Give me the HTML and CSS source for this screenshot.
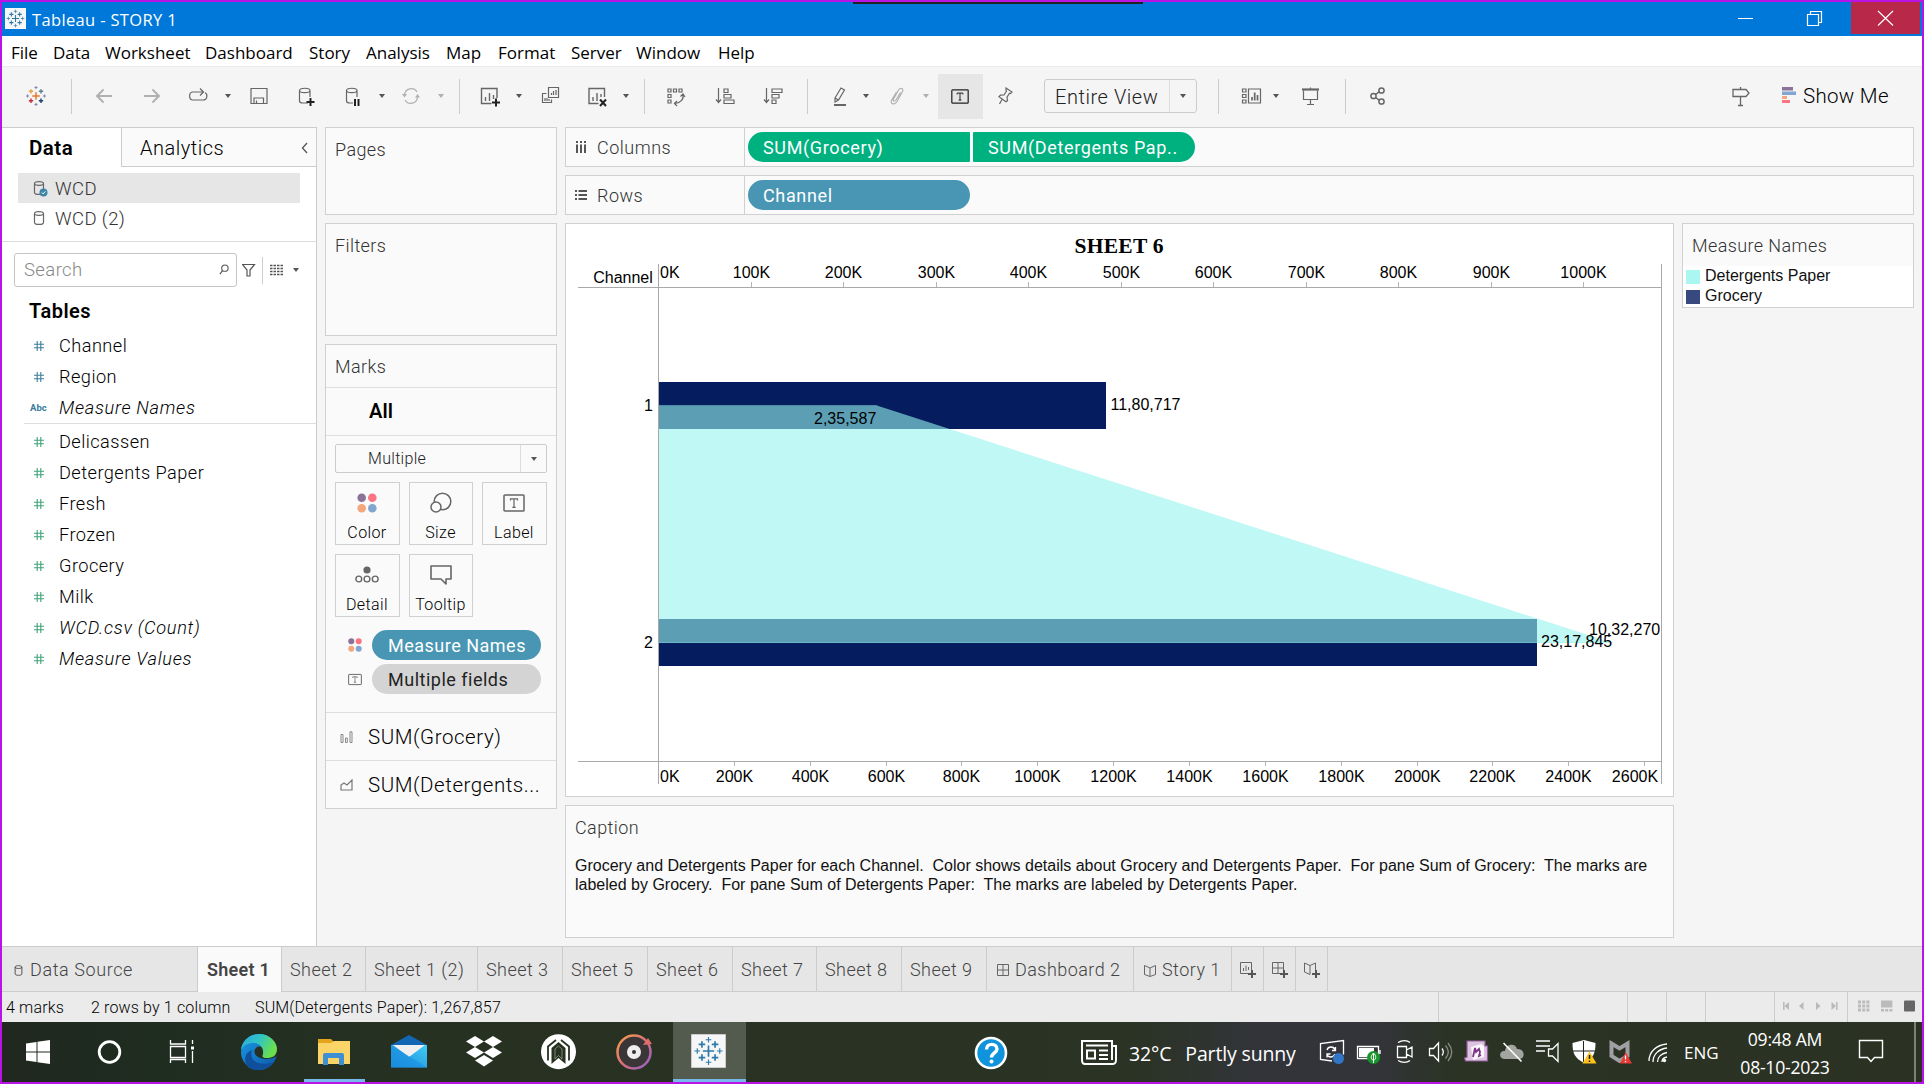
FILE: index.html
```html
<!DOCTYPE html>
<html lang="en">
<head>
<meta charset="utf-8">
<title>Tableau - STORY 1</title>
<link rel="stylesheet" href="styles.css">
</head>
<body>
<svg class="defs" aria-hidden="true">
  <defs>
    <symbol id="caret" viewBox="0 0 8 8"><path d="M1 2h6L4 6z" fill="currentColor"/></symbol>
    <symbol id="logo" viewBox="0 0 32 32"><path d="M16 10v12M10 16h12M9 5.500v7M5.500 9h7M23 5.500v7M19.500 9h7M9 19.500v7M5.500 23h7M23 19.500v7M19.500 23h7" fill="none" stroke="currentColor" stroke-width="1.800"/><path d="M16 1v6M13 4h6M16 25v6M13 28h6M4 13v6M1 16h6M28 13v6M25 16h6" fill="none" stroke="currentColor" stroke-width="1.200"/></symbol>
    <symbol id="db" viewBox="0 0 12 16"><path d="M1.500 3.500v9c0 2.600 9 2.600 9 0v-9c0-2.600-9-2.600-9 0c0 2.400 9 2.400 9 0" fill="none" stroke="currentColor" stroke-width="1.200"/></symbol>
    <symbol id="hash" viewBox="0 0 12 12"><path d="M4.200 1v10M7.800 1v10M1 4.200h10M1 7.800h10" fill="none" stroke="currentColor" stroke-width="1.100"/></symbol>
    <symbol id="dots" viewBox="0 0 20 20"><circle cx="4.700" cy="4.700" r="4.300" fill="#8a7299"/><circle cx="15.300" cy="4.700" r="4.300" fill="#fa7482"/><circle cx="4.700" cy="15.300" r="4.300" fill="#f2a77e"/><circle cx="15.300" cy="15.300" r="4.300" fill="#82a6cf"/></symbol>
    <symbol id="tbox" viewBox="0 0 22 18"><rect x="1" y="1" width="20" height="16" rx=".8" fill="none" stroke="currentColor" stroke-width="1.500"/><path d="M7.500 6.500v-1.700h7v1.700M11 4.800v8.600M9.300 13.400h3.400" fill="none" stroke="currentColor" stroke-width="1.200"/></symbol>
  </defs>
</svg>
<div class="screen">
  <header class="titlebar">
    <svg class="app-icon"><rect width="21" height="21" fill="#f7f7f7"/><use href="#logo" x="1" y="1" width="19" height="19"/></svg>
    <span class="app-name">Tableau - STORY 1</span>
    <svg class="win-btn" viewBox="0 0 69 32"><path d="M25 16.500h15" stroke="#fff"/></svg>
    <svg class="win-btn" viewBox="0 0 69 32"><path d="M25.500 12.500h11v11h-11zM28.500 12v-2.500h11v11h-3" fill="none" stroke="#fff" stroke-width="1.200"/></svg>
    <svg class="win-btn close" viewBox="0 0 69 32"><path d="M27 9l15 14.500M42 9l-15 14.500" stroke="#fff" stroke-width="1.200"/></svg>
    <div class="notch"></div>
  </header>
  <nav class="menubar"><span>File</span><span>Data</span><span>Worksheet</span><span>Dashboard</span><span>Story</span><span>Analysis</span><span>Map</span><span>Format</span><span>Server</span><span>Window</span><span>Help</span></nav>
  <div class="toolbar">
    <svg class="ic" viewBox="0 0 32 32"><g fill="none" stroke-width="2.300"><path d="M16 10v12M10 16h12" stroke="#e8762d"/><path d="M8 5v7M4.500 8.500h7" stroke="#e8a14a"/><path d="M24 5v7M20.500 8.500h7" stroke="#5c7f91"/><path d="M8 20v7M4.500 23.500h7" stroke="#c4303f"/><path d="M24 20v7M20.500 23.500h7" stroke="#1f4473"/><path d="M16 0v5M13.500 2.500h5M16 27v5M13.500 29.500h5M2.500 13.500v5M0 16h5M29.500 13.500v5M27 16h5" stroke="#8088b0" stroke-width="1.600"/></g></svg>
    <i class="sep"></i>
    <svg class="ic off thick" viewBox="0 0 24 24"><path d="M20 12H5M11.500 5.500L5 12l6.500 6.500"/></svg>
    <svg class="ic off thick" viewBox="0 0 24 24"><path d="M4 12h15M12.500 5.500L19 12l-6.500 6.500"/></svg>
    <svg class="ic" viewBox="0 0 24 24"><path d="M17 8H7c-4.500 0-4.500 8 0 8h10c4.500 0 5-6 2-7.300M14 4.500L17.500 8 14 11.500"/></svg>
    <svg class="car"><use href="#caret"/></svg>
    <svg class="ic" viewBox="0 0 24 24"><path d="M4 4.500h16v15H4zM7 19v-5h9.500v5M9.500 19v-2.500"/></svg>
    <svg class="ic" viewBox="0 0 24 24"><path d="M13 19H8c-3 0-3.500-1-3.500-2V6.500c0-3 10.500-3 10.500 0V13M4.500 6.500c0 2.800 10.500 2.800 10.500 0"/><path d="M15.500 14v8M11.500 18h8" stroke="#222" stroke-width="2"/></svg>
    <svg class="ic" viewBox="0 0 24 24"><path d="M12 19H9c-3 0-3.500-1-3.500-2V6.500c0-3 10.500-3 10.500 0V13M5.500 6.500c0 2.800 10.500 2.800 10.500 0"/><path d="M14 15v7M17.500 15v7" stroke="#222" stroke-width="2"/></svg>
    <svg class="car"><use href="#caret"/></svg>
    <svg class="ic off" viewBox="0 0 24 24"><path d="M5.500 11C6 4 15 2.500 18 8M18.500 13C18 20 9 21.500 6 16"/><path d="M3 10h5l-2.500 3.500zM16 13.500h5L18.500 10z" fill="currentColor" stroke="none"/></svg>
    <svg class="car off"><use href="#caret"/></svg>
    <i class="sep"></i>
    <svg class="ic" viewBox="0 0 24 24"><path d="M12.500 19.500h-10v-15h15.500V14M6.500 17v-4M10.500 17V9M14.500 15v-4" stroke-width="1.400"/><path d="M17 14.500v8M13 18.500h8" stroke="#222" stroke-width="2"/></svg>
    <svg class="car"><use href="#caret"/></svg>
    <svg class="ic" viewBox="0 0 24 24"><path d="M9.500 3.500h10v10h-10zM7.500 9.500h-4v9h9v-3M12.500 11V9M14.500 11V7M17 11V6M6 17v-3M8 17v-3M10 17v-2"/></svg>
    <svg class="ic" viewBox="0 0 24 24"><path d="M12.500 19.500H3v-15h15.500V13M7 17v-4M11 17V9M15 13v-3" stroke-width="1.400"/><path d="M14 15.500l6 6.500M20 15.500L14 22" stroke="#222" stroke-width="2"/></svg>
    <svg class="car"><use href="#caret"/></svg>
    <i class="sep"></i>
    <svg class="ic" viewBox="0 0 24 24"><path d="M4 5h3v3H4zM9.500 5h3v3h-3zM15 5h3v3h-3zM4 10.500h3v3H4zM4 16h3v3H4zM19 10c1 5-2 9-8 9.500M16.500 12.500L19 10l2 3M13 17l-2.500 2.500L13 22"/></svg>
    <svg class="ic" viewBox="0 0 24 24"><path d="M5.500 4v14M3 15.500l2.500 3 2.500-3M11 5h4v3.500h-4zM11 10.500h7V14h-7zM11 16h10v3.500H11z"/></svg>
    <svg class="ic" viewBox="0 0 24 24"><path d="M5.500 4v14M3 15.500l2.500 3 2.500-3M11 5h10v3.500H11zM11 10.500h7V14h-7zM11 16h4v3.500h-4z"/></svg>
    <i class="sep"></i>
    <svg class="ic" viewBox="0 0 24 24"><path d="M7 14l6-10 3.500 2-6 10-3.500 2zM7 14l3.500 2"/><path d="M6 21h12" stroke-width="2"/></svg>
    <svg class="car"><use href="#caret"/></svg>
    <svg class="ic off" viewBox="0 0 24 24"><path d="M15.500 8.500L11 16c-1.500 2-3.500 1-2.500-1l5-9c2-3 5.500-1.500 4 1.500L12 17.500c-3 4.500-7.500 2-5-2L11.500 8"/></svg>
    <svg class="car off"><use href="#caret"/></svg>
    <span class="tbtn"><svg width="18" height="17"><use href="#tbox"/></svg></span>
    <svg class="ic" viewBox="0 0 24 24"><path d="M13 4l6 4-1.500 1.500-1-.3-2.500 4 .5 3.500-1.500 1-7-5 1.500-1.500 3.500-.2 2.500-4-.5-1zM9 15.500L6.500 20"/></svg>
    <div class="combo"><span>Entire View</span><b><svg class="car"><use href="#caret"/></svg></b></div>
    <i class="sep"></i>
    <svg class="ic" viewBox="0 0 24 24"><path d="M3.500 5h3.500v3H3.500zM3.500 10.500h3.500v3H3.500zM3.500 16h3.500v3H3.500zM9.500 5h12v14h-12z"/><path d="M13 16.500V13M15.700 16.500v-8M18.500 16.500V11" stroke-width="1.700"/></svg>
    <svg class="car"><use href="#caret"/></svg>
    <svg class="ic" viewBox="0 0 24 24"><path d="M3 5.500h17" stroke-width="2.200"/><path d="M4.500 6.500v9h14v-9M11.500 3.500V5M11.500 16v5M8 20.500h7"/></svg>
    <i class="sep"></i>
    <svg class="ic" viewBox="0 0 24 24"><g stroke-width="1.500"><circle cx="6.500" cy="12" r="2.600"/><circle cx="14.500" cy="6.500" r="2.600"/><circle cx="14.500" cy="17.500" r="2.600"/><path d="M8.500 10.500l4-2.800M8.500 13.500l4 2.800"/></g></svg>
    <svg class="ic" viewBox="0 0 24 24"><path d="M4 5.500h13L20 9l-3 3.500H4zM11.500 3v2.500M11.500 12.500V21M9 21.500h5" stroke-width="1.300"/></svg>
    <div class="showme"><svg width="15" height="18"><path fill="#8a7299" d="M0 0h11v3.500H0z"/><path fill="#82a6cf" d="M0 4.500h14v3.500H0z"/><path fill="#f2a77e" d="M0 9h5v3H0z"/><path fill="#fa7482" d="M0 13h8v3H0z"/></svg><span>Show Me</span></div>
  </div>

  <main class="work">
    <aside class="datapane">
      <div class="panetabs"><b>Data</b><span>Analytics<svg width="8" height="12" viewBox="0 0 8 12"><path d="M6 1L1.500 6 6 11" fill="none" stroke="#555" stroke-width="1.300"/></svg></span></div>
      <div class="sources">
        <div class="source on"><svg width="16" height="18" viewBox="0 0 16 18"><use href="#db" width="12" height="16"/><circle cx="10.500" cy="12.500" r="4" fill="#3d85a6"/><path d="M8.800 12.500l1.400 1.400 2.200-2.600" stroke="#fff" fill="none"/></svg>WCD</div>
        <div class="source"><svg width="16" height="18" viewBox="0 0 16 18"><use href="#db" width="12" height="16"/></svg>WCD (2)</div>
      </div>
      <div class="searchrow">
        <div class="search"><span>Search</span><svg width="10" height="11" viewBox="0 0 11 12"><circle cx="6.500" cy="4.500" r="3.500" fill="none" stroke="#555" stroke-width="1.200"/><path d="M4 7L1 11" stroke="#555" stroke-width="1.300"/></svg></div>
        <svg class="funnel" width="14" height="14" viewBox="0 0 14 14"><path d="M.5 1.500h12L8 7v6H5V7z" fill="none" stroke="#555" stroke-width="1.200"/></svg>
        <i></i>
        <svg width="13" height="12" viewBox="0 0 13 12"><path d="M0 1.500h13M0 4.500h13M0 7.500h13M0 10.500h13" stroke="#555" stroke-width="1.500" stroke-dasharray="2.500 1"/></svg>
        <svg class="car"><use href="#caret"/></svg>
      </div>
      <h2>Tables</h2>
      <ul class="fields dim">
        <li><svg><use href="#hash"/></svg>Channel</li>
        <li><svg><use href="#hash"/></svg>Region</li>
        <li><small>Abc</small><em>Measure Names</em></li>
      </ul>
      <ul class="fields mea">
        <li><svg><use href="#hash"/></svg>Delicassen</li>
        <li><svg><use href="#hash"/></svg>Detergents Paper</li>
        <li><svg><use href="#hash"/></svg>Fresh</li>
        <li><svg><use href="#hash"/></svg>Frozen</li>
        <li><svg><use href="#hash"/></svg>Grocery</li>
        <li><svg><use href="#hash"/></svg>Milk</li>
        <li><svg><use href="#hash"/></svg><em>WCD.csv (Count)</em></li>
        <li><svg><use href="#hash"/></svg><em>Measure Values</em></li>
      </ul>
    </aside>

    <section class="cards">
      <div class="card pages"><h3>Pages</h3></div>
      <div class="card filters"><h3>Filters</h3></div>
      <div class="card marks">
        <h3>Marks</h3>
        <div class="all">All</div>
        <div class="markbody">
          <div class="marktype"><span>Multiple</span><b><svg class="car"><use href="#caret"/></svg></b></div>
          <div class="markgrid">
            <div><svg width="20" height="20"><use href="#dots"/></svg>Color</div>
            <div><svg width="24" height="22" viewBox="0 0 24 22"><g fill="none" stroke="#666" stroke-width="1.500"><circle cx="13.500" cy="9.500" r="8.300"/><circle cx="7" cy="15" r="5" fill="#fafafa"/></g></svg>Size</div>
            <div><svg width="22" height="18"><use href="#tbox"/></svg>Label</div>
            <div><svg width="24" height="18" viewBox="0 0 24 18"><circle cx="12" cy="4" r="3.600" fill="#666"/><g fill="none" stroke="#666" stroke-width="1.400"><circle cx="3.800" cy="13" r="2.900"/><circle cx="12" cy="13" r="2.900"/><circle cx="20.200" cy="13" r="2.900"/></g></svg>Detail</div>
            <div><svg width="22" height="20" viewBox="0 0 22 20"><path d="M1 1h20v13h-5v5l-5-5H1z" fill="none" stroke="#666" stroke-width="1.600" stroke-linejoin="round"/></svg>Tooltip</div>
          </div>
          <div class="enc"><svg width="14" height="14"><use href="#dots"/></svg><span class="pill blue">Measure Names</span></div>
          <div class="enc"><svg width="14" height="13"><use href="#tbox"/></svg><span class="pill gray">Multiple fields</span></div>
        </div>
        <div class="sum"><svg width="13" height="12" viewBox="0 0 13 12"><path d="M1 3.500h2v8H1zM5.500 7h1.800v4.500H5.500zM10 .8h2v10.700h-2z" fill="none" stroke="#888"/></svg>SUM(Grocery)</div>
        <div class="sum"><svg width="13" height="12" viewBox="0 0 13 12"><path d="M1 11V6l3-2 3 2 5-5v10z" fill="none" stroke="#777" stroke-width="1.200"/></svg>SUM(Detergents...</div>
      </div>
    </section>

    <section class="canvas">
      <div class="shelf"><label><svg width="12" height="12"><path d="M2 0v2M6 0v2M10 0v2M2 3.500v8.500M6 3.500v8.500M10 3.500v8.500" stroke="#555" stroke-width="2"/></svg>Columns</label><span class="pill green l">SUM(Grocery)</span><span class="pill green r">SUM(Detergents Pap..</span></div>
      <div class="shelf"><label><svg width="12" height="12"><path d="M0 2h2M0 6h2M0 10h2M3.500 2H12M3.500 6H12M3.500 10H12" stroke="#555" stroke-width="2"/></svg>Rows</label><span class="pill blue">Channel</span></div>
      <div class="viewrow">
        <div class="viewcol">
          <div class="view">
            <svg class="chart" viewBox="566 224 1107 572">
              <text class="title" x="1119" y="253" text-anchor="middle" textLength="89">SHEET 6</text>
              <g fill="#051c5f"><path d="M659 382h447v47H659zM659 619h878v47H659z"/></g>
              <path d="M659 405.500H876.800L1613 643H659z" fill="#96f3ed" fill-opacity=".608"/>
              <path d="M659 405.500H876.800M659 642.500H1613" stroke="#96f3ed" stroke-opacity=".3"/>
              <path d="M658.500 264v520M1661.500 264v520M578 287.500h1083.500M578 761.500h1083.500" stroke="#a9a9a9"/>
              <path d="M751.500 282v5M843.500 282v5M936.500 282v5M1028.500 282v5M1121.500 282v5M1213.500 282v5M1306.500 282v5M1398.500 282v5M1491.500 282v5M1583.500 282v5M734.500 762v4M810.500 762v4M886.500 762v4M961.500 762v4M1037.500 762v4M1113.500 762v4M1189.500 762v4M1265.500 762v4M1341.500 762v4M1417.500 762v4M1492.500 762v4M1568.500 762v4M1644.500 762v4" stroke="#b5b5b5"/>
              <g text-anchor="end"><text x="652.800" y="283">Channel</text><text x="652.800" y="411">1</text><text x="652.800" y="648">2</text></g>
              <text x="660" y="278">0K</text><text x="660" y="782">0K</text>
              <g text-anchor="middle">
                <text x="751.500" y="278">100K</text><text x="843.500" y="278">200K</text><text x="936.500" y="278">300K</text><text x="1028.500" y="278">400K</text><text x="1121.500" y="278">500K</text><text x="1213.500" y="278">600K</text><text x="1306.500" y="278">700K</text><text x="1398.500" y="278">800K</text><text x="1491.500" y="278">900K</text><text x="1583.500" y="278">1000K</text>
                <text x="734.500" y="782">200K</text><text x="810.500" y="782">400K</text><text x="886.500" y="782">600K</text><text x="961.500" y="782">800K</text><text x="1037.500" y="782">1000K</text><text x="1113.500" y="782">1200K</text><text x="1189.500" y="782">1400K</text><text x="1265.500" y="782">1600K</text><text x="1341.500" y="782">1800K</text><text x="1417.500" y="782">2000K</text><text x="1492.500" y="782">2200K</text><text x="1568.500" y="782">2400K</text><text x="1635" y="782">2600K</text>
              </g>
              <text x="1110.500" y="410">11,80,717</text><text x="814" y="424">2,35,587</text><text x="1589" y="635">10,32,270</text><text x="1541" y="647">23,17,845</text>
            </svg>
          </div>
          <div class="caption"><h3>Caption</h3><p>Grocery and Detergents Paper for each Channel.&nbsp; Color shows details about Grocery and Detergents Paper.&nbsp; For pane Sum of Grocery:&nbsp; The marks are<br>labeled by Grocery.&nbsp; For pane Sum of Detergents Paper:&nbsp; The marks are labeled by Detergents Paper.</p></div>
        </div>
        <div class="legend"><h3>Measure Names</h3><ul><li><i class="aqua"></i>Detergents Paper</li><li><i class="navy"></i>Grocery</li></ul></div>
      </div>
    </section>
  </main>

  <div class="tabs">
    <span class="ds"><svg width="9" height="13"><use href="#db"/></svg>Data Source</span><span class="on">Sheet 1</span><span>Sheet 2</span><span>Sheet 1 (2)</span><span>Sheet 3</span><span>Sheet 5</span><span>Sheet 6</span><span>Sheet 7</span><span>Sheet 8</span><span>Sheet 9</span>
    <span class="wi"><svg width="12" height="12"><path d="M.5.500h11v11H.5zM6 .5v11M.5 6h11" fill="none" stroke="#666"/></svg>Dashboard 2</span>
    <span class="wi"><svg width="12" height="13"><path d="M.5 1.500L6 4l5.500-2.500v9L6 12.500.5 10.500zM6 4v8" fill="none" stroke="#666"/></svg>Story 1</span>
    <span class="add"><svg width="16" height="16"><path d="M8 11.500H.5v-11h11V8M3.500 9V6M6 9V3.500M8.500 8V5" fill="none" stroke="#666"/><path d="M12 8v8M8 12h8" stroke="#555" stroke-width="2"/></svg></span>
    <span class="add"><svg width="16" height="16"><path d="M8 11.500H.5v-11h11V8M6 .5v11M.5 6h11" fill="none" stroke="#666"/><path d="M12 8v8M8 12h8" stroke="#555" stroke-width="2"/></svg></span>
    <span class="add"><svg width="16" height="16"><path d="M11.500 8V1L6 3.500.5 1v9L6 12.500V3.500" fill="none" stroke="#666"/><path d="M12 8v8M8 12h8" stroke="#555" stroke-width="2"/></svg></span>
  </div>
  <div class="status">
    <span>4 marks</span><span>2 rows by 1 column</span><span>SUM(Detergents Paper): 1,267,857</span>
    <i></i><i></i><i></i><i></i>
    <div class="nav"><svg width="56" height="10" viewBox="0 0 56 10"><path d="M.8 1v8M53.800 1v8" stroke="#b9b9b9" stroke-width="1.500"/><path d="M6 1v8L1.500 5zM20.500 1v8L16 5zM33 1v8l4.500-4zM48.500 1v8l4.500-4z" fill="#b9b9b9"/></svg></div>
    <div class="modes"><svg width="58" height="12"><g fill="#bbb"><path d="M0 .5h3v3H0zM4.200.5h3v3h-3zM8.400.5h3v3h-3zM0 4.500h3v3H0zM4.200 4.500h3v3h-3zM8.400 4.500h3v3h-3zM0 8.500h3v3H0zM4.200 8.500h3v3h-3zM8.400 8.500h3v3h-3zM23 .5h11.400v7H23zM23 9h3v2.500h-3zM27.200 9h3v2.500h-3zM31.400 9h3v2.500h-3z"/></g><rect x="46" y=".5" width="11" height="11" rx="1" fill="#666"/></svg></div>
  </div>

  <footer class="taskbar">
    <svg class="apps" viewBox="2 1022 745 60">
      <defs>
        <linearGradient id="edgeTop" x1="0" y1="0" x2="1" y2=".4"><stop offset="0" stop-color="#2aa8e0"/><stop offset=".5" stop-color="#2fc3c8"/><stop offset="1" stop-color="#6be04c"/></linearGradient>
        <linearGradient id="edgeLow" x1="0" y1="0" x2="1" y2="1"><stop offset="0" stop-color="#1a9be3"/><stop offset="1" stop-color="#0c56a8"/></linearGradient>
        <linearGradient id="ring" x1="0" y1="0" x2="1" y2="1"><stop offset="0" stop-color="#f5a04a"/><stop offset=".5" stop-color="#dc6f74"/><stop offset="1" stop-color="#8b5fd0"/></linearGradient>
        <linearGradient id="mail" x1="0" y1="1" x2="1" y2="0"><stop offset="0" stop-color="#1784d8"/><stop offset="1" stop-color="#41cdf7"/></linearGradient>
      </defs>
      <path d="M26 1043.500l10.500-1.500v9.500H26zM37.500 1041.800l12.500-1.800v11.500H37.500zM26 1052.500h10.500v9.500L26 1060.500zM37.500 1052.500H50v11.500l-12.500-1.800z" fill="#fff"/>
      <circle cx="109.500" cy="1052" r="10.300" fill="none" stroke="#fff" stroke-width="2.800"/>
      <path d="M170.500 1040v4h15v-4M170.500 1046.500h15v11h-15zM170.500 1063v-3.500h15v3.500M192.500 1040v4M192.500 1051v12" fill="none" stroke="#fff" stroke-width="1.300"/><path d="M191 1046.500h3v3h-3z" fill="#fff"/>
      <circle cx="259" cy="1052" r="18" fill="url(#edgeLow)"/>
      <path d="M252 1050c-3 8 3 18 22 12-6 8-18 10-25 6-6-6-5-15 3-18z" fill="#104f9c"/>
      <path d="M256 1048c-4 4 0 11 10 11 4 0 8-1 11-3v-8h-14c-2-2-5-2-7 0z" fill="#263122"/>
      <path d="M241 1050c1-9 8-16 18-16 11 0 18 8 18 15s-5 9-10 9c-5 0-5-1-4-4 1-7-4-11-10-11-5 0-9 2-12 7z" fill="url(#edgeTop)"/>
      <path d="M318 1040v-1h13l3 3h16v22h-32z" fill="#e2a51b"/><path d="M318 1043h13l3-2h16v23h-32z" fill="#fbd468"/><path d="M323 1065v-10q0-2 2-2h17q2 0 2 2v10h-5v-7h-11v7z" fill="#3e8fd3"/>
      <path d="M391 1045l18-10 18 10z" fill="#1267b4"/><path d="M391 1045h36v22.500h-36z" fill="url(#mail)"/><path d="M393 1045h32l-16 12z" fill="#f0f0f0"/><path d="M391 1045l36 22.500h-36z" fill="#1c90e0" opacity=".65"/>
      <path d="M475 1036l9 5.500-9 5.500-9-5.500zM493 1036l9 5.500-9 5.500-9-5.500zM475 1047l9 5.500-9 5.500-9-5.500zM493 1047l9 5.500-9 5.500-9-5.500zM484 1055l9 5.500-9 6-9-6z" fill="#fff"/>
      <circle cx="558.500" cy="1051.700" r="17.500" fill="#fff"/>
      <path d="M556 1040l-8 6.500v14M561 1040l8 6.500v14" fill="none" stroke="#26321f" stroke-width="1.800"/>
      <path d="M551.500 1064v-16l7-6 7 6v16l-7-6z" fill="#26321f"/><path d="M555 1059v-10l3.500-3 3.500 3v10l-3.500-3.500z" fill="#26321f" stroke="#fff" stroke-width=".8" stroke-opacity=".5"/>
      <circle cx="634" cy="1052" r="16.500" fill="#3a3637" stroke="url(#ring)" stroke-width="2.500"/><path d="M643 1045l5-7 4 6z" fill="#e06d69"/><circle cx="634" cy="1052" r="7" fill="#eee"/><circle cx="634" cy="1052" r="2" fill="#333"/>
      <path d="M304 1079h61v3h-61z" fill="#76b9ed"/>
      <path d="M673 1022h73v60h-73z" fill="#fff" fill-opacity=".2"/><path d="M673 1079h73v3h-73z" fill="#76b9ed"/>
      <path d="M691.500 1034.500h34v33h-34z" fill="#f6f6f6" stroke="#ccc"/><svg x="693" y="1036" width="31" height="30" color="#2c7aab"><use href="#logo"/></svg>
    </svg>
    <svg class="help" width="36" height="36" viewBox="0 0 36 36"><circle cx="18" cy="18" r="15" fill="#0e93dc" stroke="#fff" stroke-width="2.600"/><path d="M13.500 14.500c0-7 10.500-6.500 10.500-.5 0 4-5.500 4-5.500 8.500" fill="none" stroke="#fff" stroke-width="3.400"/><circle cx="18.500" cy="26.500" r="2" fill="#fff"/></svg>
    <svg class="news" width="36" height="26" viewBox="0 0 36 26"><g fill="none" stroke="#fff" stroke-width="2"><path d="M31 7h4v14c0 4-3 4-3 4H4c-3 0-3-3-3-4V2h30v19"/><path d="M5 6.500h22M18 11.500h9M18 16h9M18 20h9M6 11.500h8v8H6z"/></g></svg>
    <span class="weather"><span>32°C</span><span>Partly sunny</span></span>
    <svg class="tray" viewBox="1318 1034 352 36">
      <g fill="none" stroke="#fff" stroke-width="1.300">
        <path d="M1332 1061l-11.500-1.500v-16l23-3v14M1327 1050c1-4 7-4 8 0M1335.500 1047v3.500h-3.500M1335 1054c-2 4-7 4-8 0M1327 1057.500v-3.500h3.500"/>
        <path d="M1357.500 1046.500h21v12h-21zM1380 1050v4M1397.500 1046.500h9v11h-9zM1406.500 1050l5.500-3v10l-5.500-3M1398 1042.500c4-2.500 9-2.500 12 0M1398 1060.500c4 2.500 9 2.500 12 0"/>
        <path d="M1429.500 1048.500h4l5-5.500v18l-5-5.500h-4zM1442 1048.500c1.500 2 1.500 5 0 7"/><path d="M1445.500 1045.500c3.500 4 3.500 9 0 13M1448 1043c5 6 5 12 0 18" stroke="#888"/>
        <path d="M1536 1041h14M1536 1046h14M1536 1051h9M1548.500 1049v7h4l5.500 5.500v-18l-5.500 5.500z"/>
        <path d="M1649 1061c0-9 7-16 18-17M1653 1062c0-8 6-13 14-14M1657.500 1062c0-5 4-8.500 9.500-9.500M1662 1062c0-3 2-4.500 5-5"/>
      </g>
      <circle cx="1338.500" cy="1058.500" r="5.500" fill="#3275c4"/><path d="M1359 1048h15v9h-15z" fill="#fff"/><circle cx="1373.500" cy="1057.500" r="6.500" fill="#17962c"/><path d="M1373.500 1053c3 3 3 6 0 7.500-3-1.500-3-4.500 0-7.500v10" fill="none" stroke="#fff"/>
      <path d="M1467 1041h18v5h2.500v15h-22l-1-3 2.500-1z" fill="#dcc4e0" stroke="#8f5a98" stroke-width="1.200"/><path d="M1471 1047l10-3 3 2v11l-11 3z" fill="#fbf7fc"/><path d="M1473 1057l2-9 1 4 3-3 1 3-1 4 2-1" fill="none" stroke="#7b3586" stroke-width="1.800"/>
      <path d="M1505 1059c-7 0-6-9 0-8 1-8 11-8 12-2 8-1 9 10 2 10z" fill="#a2a5a0"/><path d="M1503.500 1043l18 18.500" stroke="#fff" stroke-width="1.600"/>
      <path d="M1584 1040l11.500 3c0 10-2 15-11.500 20-9.500-5-11.500-10-11.500-20z" fill="#fff"/><path d="M1583.500 1041v21M1573 1051h22" stroke="#222"/><path d="M1589.500 1051.500l7 12h-14z" fill="#fcc21b"/><path d="M1589.500 1055v4M1589.500 1060.500v1.500" stroke="#222" stroke-width="1.500"/>
      <path d="M1611.500 1043.500l8 5 8-5v12.500l-8 5-8-5z" fill="none" stroke="#a0a0a4" stroke-width="4"/><path d="M1625.500 1052l6.500 11.500h-12z" fill="#e63b34"/><path d="M1625.500 1055.500v4M1625.500 1061v1.300" stroke="#fff" stroke-width="1.300"/>
      <circle cx="1664.500" cy="1060.500" r="1.700" fill="#fff"/>
    </svg>
    <span class="lang">ENG</span>
    <span class="clock">09:48 AM<br>08-10-2023</span>
    <svg class="note" width="26" height="26" viewBox="0 0 26 26"><path d="M1.500 1.500h23v17h-8L13 22.500l-3.500-4h-8z" fill="none" stroke="#fff" stroke-width="1.400"/></svg>
    <i class="peek"></i>
  </footer>
</div>
</body>
</html>
```
FILE: styles.css
```css
* { box-sizing: border-box; }
body { margin: 0; font-family: Roboto, "Liberation Sans", sans-serif; font-size: 18px; letter-spacing: .4px; color: #111; }
.defs { position: absolute; width: 0; height: 0; }
svg { flex: none; display: block; }
h2, h3, p, ul { margin: 0; padding: 0; list-style: none; font-weight: 400; }
.screen { width: 1924px; height: 1084px; border: 2px solid #b814e6; background: #f5f5f5; display: flex; flex-direction: column; overflow: hidden; white-space: nowrap; }

/* window chrome */
.titlebar { position: relative; height: 34px; background: #0078d9; display: flex; align-items: flex-start; padding-right: 2px; color: #fff; flex: none; }
.app-icon { width: 21px; height: 21px; margin: 6px 0 0 3px; color: #2c7aab; }
.app-name { flex: 1; margin-left: 6px; font: 16.500px/36px "Open Sans", sans-serif; letter-spacing: .35px; }
.win-btn { width: 69px; height: 32px; }
.close { background: #b82848; }
.notch { position: absolute; left: 851px; top: 0; width: 290px; height: 2px; background: #222; }
.menubar { height: 30px; flex: none; background: #fff; display: grid; grid-template-columns: 42px 52px 100px 104px 57px 80px 52px 73px 65px 82px 60px; padding-left: 9px; font: 17px/34px "Open Sans", sans-serif; letter-spacing: 0; color: #000; }
.toolbar { height: 61px; flex: none; border-top: 1px solid #ececec; display: grid; align-items: center; padding: 0 0 2px 22px; color: #666;
  grid-template-columns: 47px 21px 48px 46px 38px 23px 48px 46px 37px 21px 38px 22px 20px 36px 24px 47px 36px 22px 20px 49px 48px 46px 21px 34px 23px 37px 16px 55px 51px 174px 21px 33px 27px 46px 22px 362px 53px 1fr; }
.ic { width: 24px; height: 24px; fill: none; stroke: currentColor; stroke-width: 1.200; }
.ic:first-child { width: 20px; height: 20px; margin-left: 2px; }
.thick { stroke-width: 2; }
.car { width: 8px; height: 8px; color: #555; }
.toolbar .off { color: #b0b0b0; }
.sep { width: 1px; height: 35px; background: #ccc; }
.tbtn { width: 45px; height: 45px; background: #e6e6e6; color: #222; display: grid; place-items: center; padding-right: 2px; }
.combo { width: 153px; height: 34px; border: 1px solid #ccc; border-radius: 3px; display: flex; font-size: 20px; line-height: 34px; color: #222; letter-spacing: .55px; }
.combo span { flex: 1; padding-left: 10px; font-weight: 300; }
.combo b { width: 27px; border-left: 1px solid #ddd; display: grid; place-items: center; }
.showme { display: flex; align-items: center; gap: 6px; font-size: 20.500px; font-weight: 300; color: #000; letter-spacing: .3px; }

/* data pane */
.work { display: flex; height: 819px; flex: none; }
.datapane { width: 315px; background: #fff; border: solid #ccc; border-width: 1px 1px 0 0; }
.panetabs { display: flex; height: 39px; font-size: 20px; line-height: 40px; color: #000; }
.panetabs b { width: 119px; padding-left: 27px; font-weight: 600; letter-spacing: .5px; font-size: 20.500px; }
.panetabs span { flex: 1; background: #fafafa; border: solid #ccc; border-width: 0 0 1px 1px; padding: 2px 7px 0 18px; display: flex; justify-content: space-between; align-items: center; font-weight: 300; color: #000; letter-spacing: .5px; }
.sources { padding: 6px 0 8px 16px; border-bottom: 1px solid #ddd; }
.source { width: 282px; height: 30px; line-height: 30px; padding-left: 15px; display: flex; align-items: center; gap: 6px; color: #333; font-weight: 300; font-size: 18.500px; padding-top: 1px; }
.source svg { margin-top: 1px; color: #666; }
.on { background: #e6e6e6; }
.searchrow { display: flex; align-items: center; height: 34px; margin: 11px 0 0 12px; }
.search { width: 223px; height: 34px; border: 1px solid #c4c4c4; border-radius: 3px; display: flex; justify-content: space-between; align-items: center; padding: 0 7px 0 9px; color: #888; font-weight: 300; font-size: 18.500px; }
.search svg { margin-top: -1px; }
.funnel { margin: 0 6px 0 5px; }
.searchrow i { width: 1px; height: 27px; background: #ccc; margin-right: 7px; }
.searchrow .car { margin-left: 9px; }
h2 { margin: 7px 0 0 27px; font-size: 20px; font-weight: 600; line-height: 35px; height: 36px; color: #000; letter-spacing: .5px; }
.fields li { height: 31px; display: flex; align-items: center; color: #000; font-weight: 300; font-size: 18.200px; letter-spacing: .45px; }
.fields svg { width: 12px; height: 12px; margin: 0 14px 0 6px; }
.fields { margin-left: 25px; }
.fields small { width: 32px; padding-left: 3px; font-size: 9.500px; font-weight: 700; letter-spacing: 0; color: #3b7c9c; }
.fields em { letter-spacing: .7px; }
.dim { margin-left: 22px; padding-left: 3px; border-bottom: 1px solid #ddd; }
.dim svg { color: #3b7c9c; }
.mea { padding-top: 2px; }
.mea svg { color: #3ea27a; }

/* shelves and cards */
.cards { width: 232px; margin-left: 8px; display: flex; flex-direction: column; gap: 8px; }
.card, .shelf, .caption, .legend { background: #fafafa; border: 1px solid #d0d0d0; }
h3 { color: #333; font-size: 18px; font-weight: 300; line-height: 44px; padding-left: 9px; }
.pages { height: 88px; }
.filters { height: 113px; }
.marks { height: 465px; }
.marks h3 { height: 42px; }
.all { height: 49px; border: solid #ddd; border-width: 1px 0; padding-left: 43px; font-weight: 600; font-size: 20px; line-height: 47px; letter-spacing: .1px; color: #000; }
.markbody { padding: 8px 9px 0; height: 276px; }
.marktype { height: 29px; border: 1px solid #ccc; border-radius: 2px; display: flex; font-size: 16px; line-height: 27px; color: #222; font-weight: 300; letter-spacing: .3px; }
.marktype span { flex: 1; padding-left: 32px; }
.marktype b { width: 26px; border-left: 1px solid #ddd; display: grid; place-items: center; }
.markgrid { display: grid; grid-template-columns: 65px 64px 65px; gap: 9px; margin: 9px 0 13px; }
.markgrid div { height: 63px; border: 1px solid #d0d0d0; display: grid; grid-template-rows: 39px 22px; justify-items: center; align-items: center; font-size: 16px; font-weight: 300; line-height: 22px; color: #000; letter-spacing: .4px; padding-right: 1px; }
.markgrid svg { color: #666; }
.enc { display: flex; align-items: center; margin-bottom: 4px; padding-left: 13px; color: #666; }
.enc .pill { width: 169px; margin-left: 10px; padding-left: 16px; letter-spacing: .5px; }
.pill { display: block; height: 30px; line-height: 31px; border-radius: 15px; color: #fff; width: 222px; padding-left: 15px; letter-spacing: .65px; }
.blue { background: #4896b3; }
.gray { background: #d4d4d4; color: #222; }
.green { background: #00b180; }
.l { border-radius: 15px 1px 1px 15px; }
.r { border-radius: 1px 15px 15px 1px; margin-left: 3px; }
.sum { height: 48px; border-top: 1px solid #ddd; display: flex; align-items: center; gap: 15px; padding-left: 14px; font-size: 20.500px; font-weight: 300; color: #000; letter-spacing: .55px; }

.canvas { margin-left: 8px; width: 1349px; display: flex; flex-direction: column; gap: 8px; }
.shelf { height: 40px; display: flex; align-items: center; }
.shelf label { width: 179px; height: 38px; border-right: 1px solid #d0d0d0; margin-right: 3px; padding-left: 9px; display: flex; align-items: center; gap: 10px; color: #333; font-weight: 300; letter-spacing: .5px; }
.viewrow { display: flex; align-items: flex-start; gap: 8px; }
.viewcol { width: 1109px; display: flex; flex-direction: column; gap: 8px; }
.view { height: 574px; background: #fff; border: 1px solid #d0d0d0; }
.chart { width: 1107px; height: 572px; font-family: "Liberation Sans", Arial, sans-serif; font-size: 16px; letter-spacing: 0; }
.title { font: bold 21.500px "Liberation Serif", serif; }
.caption { height: 133px; }
.caption p { font: 16px/19px "Liberation Sans", Arial, sans-serif; letter-spacing: 0; padding: 6px 0 0 9px; }
.legend { width: 232px; height: 85px; }
.legend h3 { height: 42px; }
.legend ul { background: #fff; height: 41px; padding: 0 0 0 3px; font: 16px/20px "Liberation Sans", Arial, sans-serif; letter-spacing: 0; }
.legend li { display: flex; align-items: center; gap: 5px; height: 20px; }
.legend i { width: 14px; height: 14px; margin-top: 2px; }
.aqua { background: #aaf6f0; }
.navy { background: #37497f; }

/* sheet tabs and status */
.tabs { height: 46px; flex: none; background: #e6e6e6; border: solid #ccc; border-width: 1px 0; color: #444; font-weight: 300; display: grid; line-height: 44px; grid-template-columns: 196px 84px 84px 112px 85px 85px 85px 84px 85px 85px 147px 98px 32px 32px 32px; letter-spacing: .45px; }
.tabs span { border-right: 1px solid #ccc; padding: 1px 0 0 8px; display: flex; align-items: center; gap: 6px; }
.tabs .ds { padding-left: 12px; gap: 7px; letter-spacing: .6px; }
.tabs .on { background: #fafafa; font-weight: 600; padding-left: 9px; letter-spacing: .25px; }
.tabs .wi { padding-left: 10px; }
.tabs .add { padding-left: 8px; }
.status { height: 30px; flex: none; background: #ebebeb; display: grid; grid-template-columns: 85px 164px 1183px 189px 39px 39px 69px 73px 1fr; font-size: 16px; font-weight: 300; color: #000; line-height: 31px; padding-left: 4px; letter-spacing: .15px; }
.status i, .nav, .modes { border-left: 1px solid #ccc; }
.nav { padding: 9px 0 0 8px; }
.modes { padding: 8px 0 0 10px; }

/* taskbar */
.taskbar { height: 60px; flex: none; display: flex; align-items: flex-start; color: #fff; background: linear-gradient(90deg, #20281f 0, #1f2d20 170px, #273122 420px, #2a3324 1130px, #33343a 1260px, #33343a 1370px, #2b3324 1450px, #2b3224 100%); font-family: "Open Sans", sans-serif; letter-spacing: 0; }
.apps { width: 745px; height: 60px; }
.help { margin: 13px 0 0 226px; }
.news { margin: 17px 0 0 72px; }
.weather { width: 190px; margin-left: 12px; display: flex; gap: 14px; font-size: 19.500px; line-height: 64px; letter-spacing: -.15px; }
.tray { width: 352px; height: 36px; margin-top: 12px; margin-left: -1px; }
.lang { width: 53px; margin-left: 14px; font-size: 17px; line-height: 61px; }
.clock { width: 108px; margin-left: -6px; text-align: center; font-size: 17.600px; line-height: 28px; padding-top: 3px; letter-spacing: -.25px; }
.note { margin: 17px 0 0 19px; }
.peek { width: 2px; height: 60px; background: #7d8178; margin-left: 30px; }
```
